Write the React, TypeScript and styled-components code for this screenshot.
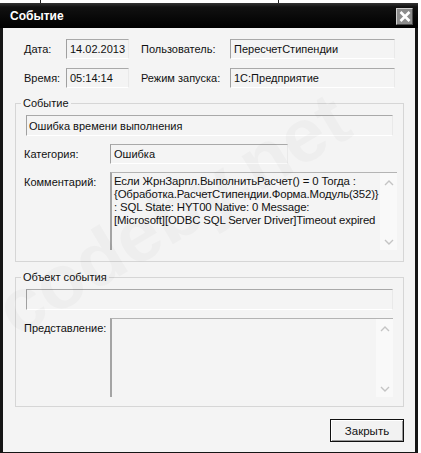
import styled, { createGlobalStyle } from 'styled-components';

const GlobalStyle = createGlobalStyle`
  html, body {
    margin: 0;
    padding: 0;
    background: #ffffff;
  }
  body {
    font-family: "Liberation Sans", Arial, sans-serif;
    font-size: 11px;
    color: #111111;
  }
`;

const comment = [
  'Если ЖрнЗарпл.ВыполнитьРасчет() = 0 Тогда :',
  '{Обработка.РасчетСтипендии.Форма.Модуль(352)}',
  ': SQL State: HYT00 Native: 0 Message:',
  '[Microsoft][ODBC SQL Server Driver]Timeout expired',
];

const App = () => {
  return (
    <>
      <GlobalStyle />
      <Page>
        <Backdrop>
          <BackdropLine $x={40} />
          <BackdropLine $x={237} />
        </Backdrop>
        <Window>
          <TitleBar>
            <TitleText>Событие</TitleText>
            <CloseButton aria-label="close">
              <svg width="12" height="11" viewBox="0 0 12 11">
                <path d="M1.5 1 L10.5 10 M10.5 1 L1.5 10" stroke="#fff" strokeWidth="2.6" />
              </svg>
            </CloseButton>
          </TitleBar>

          <Body>
            <Watermark>codeby.net</Watermark>

            <InfoGrid>
              <Label>Дата:</Label>
              <Field $width={63}>14.02.2013</Field>
              <Label>Пользователь:</Label>
              <Field $width={165}>ПересчетСтипендии</Field>
              <Label>Время:</Label>
              <Field $width={63}>05:14:14</Field>
              <Label>Режим запуска:</Label>
              <Field $width={165}>1С:Предприятие</Field>
            </InfoGrid>

            <Group>
              <Legend>Событие</Legend>
              <WideField>Ошибка времени выполнения</WideField>
              <FormRow>
                <RowLabel>Категория:</RowLabel>
                <Field $width={178}>Ошибка</Field>
              </FormRow>
              <FormRow>
                <RowLabel>Комментарий:</RowLabel>
                <Memo $height={78}>
                  <MemoText>
                    {comment.map((line) => (
                      <div key={line}>{line}</div>
                    ))}
                  </MemoText>
                  <ScrollBar>
                    <Chevron d="M1 5 L5 1 L9 5" />
                    <Chevron d="M1 1 L5 5 L9 1" />
                  </ScrollBar>
                </Memo>
              </FormRow>
            </Group>

            <Group $second>
              <Legend>Объект события</Legend>
              <WideField />
              <FormRow>
                <RowLabel>Представление:</RowLabel>
                <Memo $height={79}>
                  <MemoText />
                  <ScrollBar>
                    <Chevron d="M1 5 L5 1 L9 5" />
                    <Chevron d="M1 1 L5 5 L9 1" />
                  </ScrollBar>
                </Memo>
              </FormRow>
            </Group>

            <Footer>
              <Button>Закрыть</Button>
            </Footer>
          </Body>
        </Window>
      </Page>
    </>
  );
};

export default App;

const Chevron = ({ d }: { d: string }) => (
  <svg width="10" height="6" viewBox="0 0 10 6">
    <path d={d} fill="none" stroke="#c4c4c4" strokeWidth="1.4" />
  </svg>
);

const Page = styled.div`
  width: 421px;
  height: 453px;
  overflow: hidden;
`;

const Backdrop = styled.div`
  display: flex;
  height: 3px;
`;

const BackdropLine = styled.div<{ $x: number }>`
  width: 1px;
  height: 3px;
  margin-left: ${({ $x }) => $x}px;
  background: #222;
`;

const Window = styled.div`
  width: 412px;
  border: 3px solid #151515;
  border-top: none;
  background: #f4f4f4;
`;

const TitleBar = styled.div`
  display: flex;
  align-items: center;
  justify-content: space-between;
  height: 25px;
  margin: 0 -3px;
  padding: 0 5px 0 10px;
  background: linear-gradient(#333 0, #111 4px, #000 100%);
`;

const TitleText = styled.span`
  color: #ffffff;
  font-family: "Liberation Sans", Arial, sans-serif;
  font-weight: 700;
  font-size: 12px;
`;

const CloseButton = styled.div`
  display: grid;
  place-items: center;
  width: 17px;
  height: 17px;
  margin-top: 2px;
  box-sizing: border-box;
  background: #8c8c8c;
  border: 1px solid;
  border-color: #d0d0d0 #4a4a4a #4a4a4a #d0d0d0;
`;

const Body = styled.div`
  position: relative;
  display: flex;
  flex-direction: column;
  padding: 11px 11px 10px 12px;
  overflow: hidden;
`;

const Watermark = styled.div`
  position: absolute;
  left: 0;
  top: 250px;
  font-family: "Liberation Sans", Arial, sans-serif;
  font-weight: 700;
  font-size: 76px;
  line-height: 76px;
  color: rgba(0, 0, 0, 0.025);
  transform: rotate(-31deg);
  transform-origin: left center;
  white-space: nowrap;
  pointer-events: none;
  z-index: 2;
`;

const InfoGrid = styled.div`
  display: grid;
  grid-template-columns: 42px 75px 89px 165px;
  row-gap: 9px;
  padding-left: 9px;
`;

const Label = styled.div`
  display: flex;
  align-items: center;
  height: 20px;
  white-space: nowrap;
`;

const sunken = `
  box-sizing: border-box;
  border: 1px solid;
  border-color: #a9a9a9 #e9e9e9 #ffffff #a0a0a0;
  background: #f4f4f4;
`;

const Field = styled.div<{ $width: number }>`
  ${sunken}
  display: flex;
  align-items: center;
  width: ${({ $width }) => $width}px;
  height: 20px;
  padding: 0 3px;
  white-space: nowrap;
  overflow: hidden;
`;

const WideField = styled.div`
  ${sunken}
  display: flex;
  align-items: center;
  height: 21px;
  margin-left: 2px;
  padding: 0 2px;
  white-space: nowrap;
`;

const Group = styled.fieldset<{ $second?: boolean }>`
  display: flex;
  flex-direction: column;
  gap: 8px;
  margin: 9px 0 0 0;
  padding: 5px 10px ${({ $second }) => ($second ? '9px' : '11px')} 8px;
  border: 1px solid #d6d6d6;
  min-width: 0;
`;

const Legend = styled.legend`
  padding: 0 2px;
  margin-left: -3px;
  line-height: 13px;
`;

const FormRow = styled.div`
  display: flex;
  align-items: flex-start;
`;

const RowLabel = styled.div`
  width: 86px;
  flex-shrink: 0;
  line-height: 20px;
  white-space: nowrap;
`;

const Memo = styled.div<{ $height: number }>`
  display: flex;
  flex: 1;
  height: ${({ $height }) => $height}px;
  box-sizing: border-box;
  border-top: 1px solid #b4b4b4;
  border-left: 2px solid #a4a4a4;
  background: #f4f4f4;
`;

const MemoText = styled.div`
  flex: 1;
  padding: 2px 2px;
  font-size: 11.4px;
  line-height: 13px;
  letter-spacing: -0.15px;
  white-space: nowrap;
  overflow: hidden;
`;

const ScrollBar = styled.div`
  display: flex;
  flex-direction: column;
  justify-content: space-between;
  align-items: center;
  width: 17px;
  padding: 7px 0 5px;
  background: #f9f9f9;
`;

const Footer = styled.div`
  display: flex;
  justify-content: flex-end;
  margin-top: 12px;
`;

const Button = styled.div`
  display: flex;
  align-items: center;
  justify-content: center;
  width: 74px;
  height: 23px;
  box-sizing: border-box;
  border: 1px solid #101010;
  box-shadow: inset 1px 1px 0 #ffffff, inset -1px -1px 0 #9a9a9a;
  background: #f2f2f2;
  font-size: 11.5px;
`;
